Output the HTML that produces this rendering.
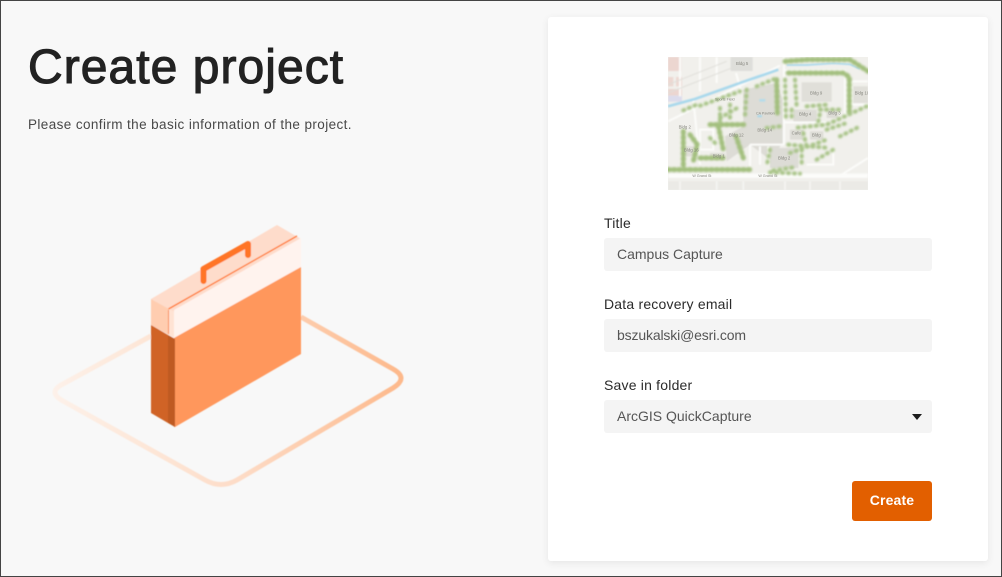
<!DOCTYPE html>
<html lang="en">
<head>
<meta charset="utf-8">
<title>Create project</title>
<style>
*{box-sizing:border-box;margin:0;padding:0}
html,body{width:1002px;height:577px;overflow:hidden;background:#f8f8f8;font-family:"Liberation Sans",sans-serif;color:#222}
.frame{position:absolute;left:0;top:0;width:1002px;height:577px;border:1px solid #444;z-index:9;pointer-events:none}
h1{position:absolute;left:28px;top:40px;font-size:48px;line-height:55px;font-weight:400;letter-spacing:1.05px;color:#222;-webkit-text-stroke:1.1px #222;white-space:nowrap}
.sub{position:absolute;left:28px;top:116px;font-size:13.5px;line-height:17px;letter-spacing:.4px;color:#484848;white-space:nowrap}
.card{position:absolute;left:548px;top:17px;width:440px;height:544px;background:#fff;border-radius:3px;box-shadow:0 2px 8px rgba(0,0,0,.08)}
.lab{position:absolute;left:604px;font-size:14px;line-height:18px;letter-spacing:.2px;color:#2b2b2b;white-space:nowrap}
.inp{position:absolute;left:604px;width:328px;height:33px;background:#f4f4f4;border-radius:3px;padding-left:13px;font-size:14px;line-height:33px;color:#555;white-space:nowrap}
.arrow{position:absolute;left:912px;top:414px;width:0;height:0;border-left:5.5px solid transparent;border-right:5.5px solid transparent;border-top:6px solid #1c1c1c}
.btn{position:absolute;left:852px;top:481px;width:80px;height:40px;background:#e25f00;border-radius:3px;color:#fff;font-size:14px;font-weight:700;line-height:38px;text-align:center;letter-spacing:.15px}
svg{position:absolute;display:block}
</style>
</head>
<body>
<h1>Create project</h1>
<p class="sub">Please confirm the basic information of the project.</p>

<svg style="left:0;top:0" width="500" height="577" viewBox="0 0 500 577">
<defs>
<linearGradient id="g" gradientUnits="userSpaceOnUse" x1="55" y1="400" x2="404" y2="370">
<stop offset="0" stop-color="#fdf1e9"/><stop offset=".5" stop-color="#fddcc7"/><stop offset="1" stop-color="#fdb88a"/>
</linearGradient>
<filter id="sb"><feGaussianBlur stdDeviation=".4"/></filter>
</defs>
<g filter="url(#sb)">
<path d="M151 336 L63 384 Q47 392 63 401 L205 480 Q221 489 237 480 L393 388 Q409 378 393 369 L301 317" fill="none" stroke="url(#g)" stroke-width="5"/>
<path d="M151 299 L277 225 L301 239 L174 312 Z" fill="#fedccb"/>
<path d="M151 299 L169 309 L169 335 L151 325 Z" fill="#ffcdb0"/>
<path d="M169 309 L174 312 L174 338 L169 335 Z" fill="#ffe3d4"/>
<path d="M174 310 L301 238 L301 267 L174 338 Z" fill="#fff3ee"/>
<path d="M174 338 L301 267 L301 354 L175 427 L174 427 Z" fill="#ff975c"/>
<path d="M151 325 L168 335 L168 423 L151 413 Z" fill="#d06426"/>
<path d="M168 335 L175 339 L175 427 L168 423 Z" fill="#bf5a20"/>
<path d="M168.500 309 L297 236" fill="none" stroke="#ff7a2c" stroke-width="1.300"/>
<path d="M168.500 310 L168.500 334" fill="none" stroke="#f98c50" stroke-width="1"/>
<path d="M203.500 281 L203.500 269 L248 244 L248 255" fill="none" stroke="#ff7428" stroke-width="6" stroke-linecap="round" stroke-linejoin="round"/>
</g>
</svg>

<div class="card"></div>

<svg style="left:668px;top:57px" width="200" height="133" viewBox="24 22 600 399">
<defs>
<filter id="b1" x="-5%" y="-5%" width="110%" height="110%"><feGaussianBlur stdDeviation="2"/></filter>
<filter id="b2" x="-5%" y="-5%" width="110%" height="110%"><feGaussianBlur stdDeviation="3"/></filter>
</defs>
<rect x="24" y="22" width="600" height="399" fill="#f1f0ec"/>
<g filter="url(#b1)">
<rect x="24" y="22" width="40" height="42" fill="#ecd6d0"/>
<rect x="24" y="82" width="16" height="28" fill="#edd8d2"/>
<rect x="48" y="82" width="18" height="28" fill="#edd8d2"/>
<rect x="24" y="118" width="42" height="20" fill="#ecd6d0"/>
<rect x="24" y="138" width="42" height="18" fill="#dcdcec"/>
<rect x="212" y="22" width="66" height="42" fill="#dededa"/>
<path d="M250 120 L350 100 L368 150 L368 280 L330 330 L270 285 L200 335 L195 260 L250 230Z" fill="#dddcd6"/>
<rect x="425" y="98" width="90" height="58" fill="#e0dfd9"/>
<rect x="580" y="110" width="44" height="50" fill="#e0dfd9"/>
<rect x="400" y="180" width="70" height="40" fill="#dddcd6"/>
<rect x="500" y="180" width="34" height="25" fill="#dddcd6"/>
<rect x="390" y="240" width="40" height="30" fill="#dddcd6"/>
<rect x="450" y="245" width="40" height="25" fill="#dddcd6"/>
<rect x="330" y="295" width="85" height="60" fill="#dddcd6"/>
<rect x="70" y="290" width="40" height="30" fill="#dfded8"/>
<rect x="150" y="310" width="45" height="20" fill="#dfded8"/>
<path d="M24 215 L360 48 M100 150 L120 345 M372 22 L372 285 M228 70 L245 130 M372 62 L555 62 L555 200 M372 218 L500 218 M270 285 L372 285 M270 285 L270 350 M300 290 L300 345 M325 290 L325 345 M540 378 L624 325 M440 345 L520 345 L520 300 M120 240 L160 240 L160 300 L120 300 Z M575 95 L624 95 M575 95 L575 165 L624 165 M60 22 L60 140 M120 22 L120 125 M170 22 L170 100" fill="none" stroke="#fcfcfa" stroke-width="6"/>
<path d="M24 378 L624 378" stroke="#fcfcfa" stroke-width="13"/>
<path d="M24 130 L228 50 M24 105 L200 35" stroke="#dfded9" stroke-width="3" fill="none"/>
<rect x="24" y="395" width="600" height="26" fill="#ebeae6"/>
<path d="M60 395V421M170 395V421M250 395V421M375 395V421M450 395V421M540 395V421" stroke="#f8f8f6" stroke-width="4"/>
<path d="M24 170 L105 148 L240 100 L355 60" fill="none" stroke="#a8d8ec" stroke-width="8"/>
<path d="M380 46 L440 46 L520 41 L570 44 L600 58" fill="none" stroke="#a8d8ec" stroke-width="5"/>
<rect x="298" y="148" width="18" height="8" fill="#b4dcea"/>
<rect x="292" y="196" width="14" height="7" fill="#aad8e8"/>
</g>
<g filter="url(#b2)" fill="none" stroke="#a3bf7e" stroke-linecap="round">
<g stroke-width="15" stroke-dasharray="5 11">
<path d="M24 360 L270 360"/><path d="M70 245 L70 350"/><path d="M90 255 L112 285 L100 335"/>
<path d="M375 35 L440 30 L570 30 L624 65"/><path d="M385 70 L550 70 L568 82 L568 190"/>
<path d="M175 230 L190 300"/><path d="M150 225 L260 225"/><path d="M228 260 L250 325"/>
<path d="M120 325 L200 325"/><path d="M350 90 L352 190"/>
</g>
<g stroke-width="12" stroke-dasharray="3 15" stroke="#a9c488">
<path d="M375 90 L378 210"/><path d="M405 90 L410 170"/><path d="M620 170 L500 225 L400 235"/>
<path d="M70 182 L110 165"/><path d="M120 168 L240 125"/><path d="M180 205 L240 170"/><path d="M180 175 L180 225"/><path d="M210 165 L210 215"/>
<path d="M290 110 L350 85"/><path d="M260 120 L255 200"/><path d="M320 235 L360 230"/>
<path d="M395 180 L395 215"/><path d="M480 180 L550 180"/><path d="M475 215 L480 190"/>
<path d="M430 250 L440 290"/><path d="M500 240 L560 220"/><path d="M385 285 L510 295"/>
<path d="M470 330 L520 300"/><path d="M330 300 L320 350"/><path d="M425 300 L425 345"/>
<path d="M340 362 L410 352"/><path d="M540 260 L600 230"/><path d="M330 368 L420 372"/>
<path d="M390 310 L500 270"/><path d="M150 265 L175 290"/><path d="M440 170 L500 165"/>
</g>
</g>
<g fill="#86867f" font-family="Liberation Sans,sans-serif" font-size="13">
<text x="228" y="46">Bldg 5</text><text x="450" y="134">Bldg 9</text><text x="584" y="134">Bldg 10</text>
<text x="165" y="152" font-size="11">Sports Field</text><text x="288" y="194" font-size="11">CA Pavilion</text><text x="417" y="197">Bldg 4</text>
<text x="505" y="194">Bldg 3</text><text x="56" y="236">Bldg 2</text><text x="207" y="260">Bldg 12</text>
<text x="292" y="246">Bldg 14</text><text x="395" y="255">Cafe</text><text x="456" y="260">Bldg</text>
<text x="72" y="306">Bldg 16</text><text x="158" y="324">Bldg 1</text><text x="354" y="330">Bldg 2</text>
<text x="97" y="382" font-size="11">W Grand St</text><text x="295" y="382" font-size="11">W Grand St</text>
</g>
</svg>

<div class="lab" style="top:214px">Title</div>
<div class="inp" style="top:238px">Campus Capture</div>
<div class="lab" style="top:295px">Data recovery email</div>
<div class="inp" style="top:319px;letter-spacing:-.15px">bszukalski@esri.com</div>
<div class="lab" style="top:376px">Save in folder</div>
<div class="inp" style="top:400px">ArcGIS QuickCapture</div>
<div class="arrow"></div>
<div class="btn">Create</div>
<div class="frame"></div>
</body>
</html>
